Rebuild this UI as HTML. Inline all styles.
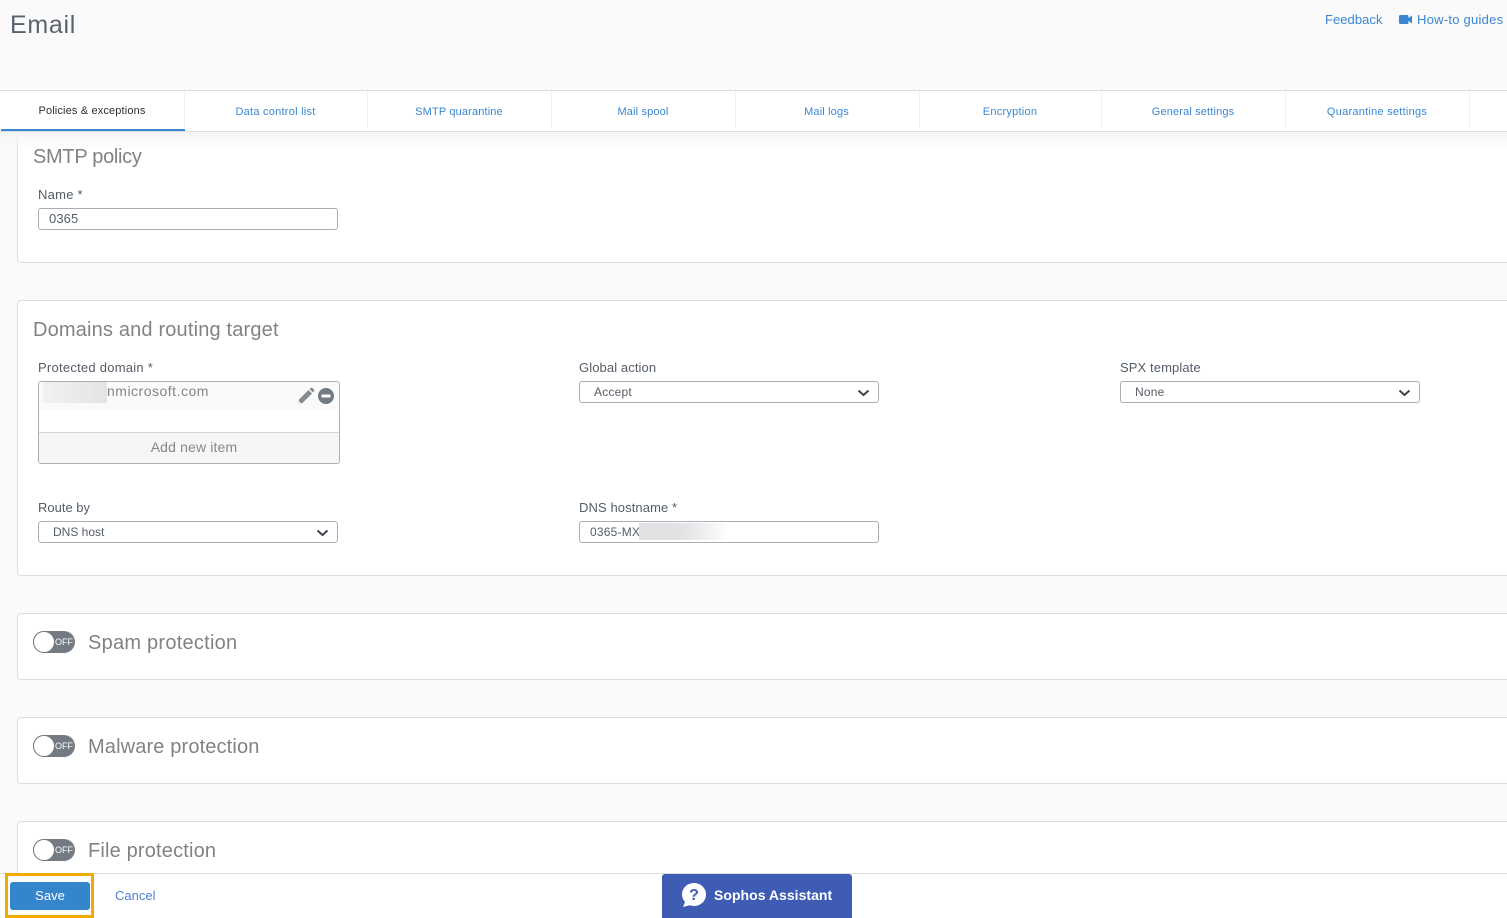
<!DOCTYPE html>
<html><head><meta charset="utf-8"><title>Email</title>
<style>
html,body{margin:0;padding:0;width:1507px;height:918px;overflow:hidden;background:#fafafa;font-family:"Liberation Sans",sans-serif}
.a{position:absolute;white-space:nowrap}
.tab{position:absolute;top:93px;height:38px;line-height:38px;font-size:11px;color:#3a87cf;text-align:center;box-sizing:border-box;letter-spacing:.15px}
.sep{position:absolute;top:91px;width:1px;height:39px;background:#f3f3f3}
.card{position:absolute;left:17px;width:1500px;background:#fff;border:1px solid #dcdcdc;border-radius:4px;box-sizing:border-box}
.h{position:absolute;color:#808386;font-size:20px;white-space:nowrap;letter-spacing:.2px}
.l{position:absolute;color:#555d66;font-size:13px;white-space:nowrap;letter-spacing:.1px}
.inp{position:absolute;width:300px;height:22px;border:1px solid #a9afb5;border-radius:3px;box-sizing:border-box;background:#fff;font-size:12px;color:#555d66;line-height:20px;letter-spacing:.2px}
.inp svg{position:absolute;right:8px;top:7px}
.tg{position:absolute;left:33px;width:42px;height:22px;border-radius:11px;background:#737a82}
.tg i{position:absolute;left:0;top:0;width:20px;height:20px;border:1px solid #737a82;border-radius:50%;background:#fff}
.tg b{position:absolute;left:22px;top:6px;font-size:9px;line-height:11px;font-weight:normal;color:#fff}
</style></head><body>
<div class="a" style="left:10px;top:11px;font-size:25px;color:#5a636c;letter-spacing:.7px">Email</div>
<div class="a" style="left:1325px;top:12px;font-size:13px;color:#3a87cf;letter-spacing:.05px">Feedback</div>
<svg class="a" style="left:1399px;top:14px" width="14" height="11" viewBox="0 0 14 11"><rect x="0" y="1" width="9.500" height="9" rx="1.500" fill="#3a87cf"/><path d="M9 4.500 13 1.500V9.500L9 6.500Z" fill="#3a87cf"/></svg>
<div class="a" style="left:1417px;top:12px;font-size:13px;color:#3a87cf;letter-spacing:.25px">How-to guides</div>

<div class="a" style="left:0;top:132px;width:1507px;height:20px;background:linear-gradient(#f5f5f5,rgba(255,255,255,0));z-index:3"></div>

<div class="card" style="top:120px;height:143px"></div>
<div class="a" style="left:0;top:90px;width:1507px;height:42px;background:#fff;border-top:1px solid #dedede;border-bottom:1px solid #dedede;box-sizing:border-box"></div>
<div class="a" style="left:1px;top:129px;width:184px;height:2px;background:#3a87cf"></div>
<div class="tab" style="left:0;width:184px;top:92px;color:#2b2f33">Policies &amp; exceptions</div>
<div class="tab" style="left:184px;width:183px;letter-spacing:.25px">Data control list</div>
<div class="tab" style="left:367px;width:184px">SMTP quarantine</div>
<div class="tab" style="left:551px;width:184px">Mail spool</div>
<div class="tab" style="left:736px;width:181px">Mail logs</div>
<div class="tab" style="left:920px;width:180px;letter-spacing:.25px">Encryption</div>
<div class="tab" style="left:1101px;width:184px">General settings</div>
<div class="tab" style="left:1286px;width:182px;letter-spacing:.25px">Quarantine settings</div>
<div class="sep" style="left:184px;top:91px;height:38px"></div><div class="sep" style="left:367px"></div><div class="sep" style="left:551px"></div><div class="sep" style="left:735px"></div><div class="sep" style="left:919px"></div><div class="sep" style="left:1101px"></div><div class="sep" style="left:1285px"></div><div class="sep" style="left:1469px"></div>

<div class="h" style="left:33px;top:146px;z-index:4;letter-spacing:-.3px">SMTP policy</div>
<div class="l" style="left:38px;top:187px;letter-spacing:.25px">Name *</div>
<div class="inp" style="left:38px;top:208px;padding-left:10px;font-size:13px;letter-spacing:.1px">0365</div>

<div class="card" style="top:300px;height:276px"></div>
<div class="h" style="left:33px;top:319px;letter-spacing:.17px">Domains and routing target</div>
<div class="l" style="left:38px;top:360px;letter-spacing:.25px">Protected domain *</div>
<div class="a" style="left:38px;top:381px;width:302px;height:83px;border:1px solid #a9afb5;border-radius:3px;box-sizing:border-box;background:#fff;overflow:hidden">
  <div style="position:absolute;left:0;top:0;width:100%;height:28px;background:#fafafa"></div>
  <div style="position:absolute;left:4px;top:0;width:64px;height:21px;background:linear-gradient(90deg,#f1f1f1,#e4e4e4)"></div>
  <div style="position:absolute;left:68px;top:1px;font-size:14px;color:#80858a;letter-spacing:.5px">nmicrosoft.com</div>
  <div style="position:absolute;left:0;top:50px;width:100%;height:32px;background:#f6f6f6;border-top:1px solid #d5d5d5;text-align:center;line-height:29px;font-size:14px;color:#84888c;box-sizing:border-box;padding-left:10px;letter-spacing:.15px">Add new item</div>
</div>
<svg class="a" style="left:297px;top:387px" width="18" height="18" viewBox="0 0 18 18"><path d="M1 17 2 12.500 11.500 3 15 6.500 5.500 16Z" fill="#868b91"/><path d="M12.500 2 14 .8Q14.800.3 15.500 1L17 2.500Q17.600 3.200 17 4L16 5.500Z" fill="#868b91"/><path d="M1 17 1.700 14 4 16.300Z" fill="#fff"/></svg>
<svg class="a" style="left:318px;top:387.500px" width="16" height="16" viewBox="0 0 16 16"><circle cx="8" cy="8" r="8" fill="#737a82"/><rect x="3.500" y="6.500" width="9" height="3" rx=".5" fill="#fff"/></svg>

<div class="l" style="left:579px;top:360px">Global action</div>
<div class="inp" style="left:579px;top:381px;padding-left:14px">Accept<svg width="13" height="8" viewBox="0 0 13 8"><path d="M1.500 1.500 6.500 6 11.500 1.500" fill="none" stroke="#3c4650" stroke-width="2"/></svg></div>
<div class="l" style="left:1120px;top:360px">SPX template</div>
<div class="inp" style="left:1120px;top:381px;padding-left:14px">None<svg width="13" height="8" viewBox="0 0 13 8"><path d="M1.500 1.500 6.500 6 11.500 1.500" fill="none" stroke="#3c4650" stroke-width="2"/></svg></div>

<div class="l" style="left:38px;top:500px;letter-spacing:0">Route by</div>
<div class="inp" style="left:38px;top:521px;padding-left:14px;letter-spacing:0">DNS host<svg width="13" height="8" viewBox="0 0 13 8"><path d="M1.500 1.500 6.500 6 11.500 1.500" fill="none" stroke="#3c4650" stroke-width="2"/></svg></div>
<div class="l" style="left:579px;top:500px">DNS hostname *</div>
<div class="inp" style="left:579px;top:521px;padding-left:10px">0365-MX<div style="position:absolute;left:59px;top:1px;width:90px;height:17px;background:linear-gradient(90deg,#dfe1e3,#e2e3e5 50%,#fff)"></div></div>

<div class="card" style="top:613px;height:67px"></div>
<div class="tg" style="top:631px"><i></i><b>OFF</b></div>
<div class="h" style="left:88px;top:632px;letter-spacing:.25px">Spam protection</div>

<div class="card" style="top:717px;height:67px"></div>
<div class="tg" style="top:735px"><i></i><b>OFF</b></div>
<div class="h" style="left:88px;top:736px;letter-spacing:.14px">Malware protection</div>

<div class="card" style="top:821px;height:80px"></div>
<div class="tg" style="top:839px"><i></i><b>OFF</b></div>
<div class="h" style="left:88px;top:840px;letter-spacing:.17px">File protection</div>

<div class="a" style="left:0;top:873px;width:1507px;height:45px;background:#fff;border-top:1px solid #dedede;box-sizing:border-box"></div>
<div class="a" style="left:5px;top:873px;width:89px;height:45px;border:3px solid #f2a900;box-sizing:border-box"></div>
<div class="a" style="left:10px;top:882px;width:80px;height:28px;background:#3585cc;border-radius:3px;color:#fff;font-size:13px;line-height:27px;text-align:center">Save</div>
<div class="a" style="left:115px;top:888px;font-size:13px;color:#4f82cf;letter-spacing:0">Cancel</div>

<div class="a" style="left:662px;top:874px;width:190px;height:44px;background:#3f5cb5;border-radius:3px 3px 0 0"></div>
<svg class="a" style="left:681px;top:882px" width="26" height="26" viewBox="0 0 26 26"><path d="M13 1C19.600 1 25 6 25 12.500 25 19 19.600 24 13 24 11.500 24 10 23.700 8.800 23.300L2 25 4 20C2.200 18 1 15.500 1 12.500 1 6 6.400 1 13 1Z" fill="#fff"/><text x="13" y="18" font-family="Liberation Sans,sans-serif" font-size="16" font-weight="bold" fill="#3f5cb5" text-anchor="middle">?</text></svg>
<div class="a" style="left:714px;top:887px;font-size:14px;font-weight:bold;color:#fff;letter-spacing:.03px">Sophos Assistant</div>
</body></html>
